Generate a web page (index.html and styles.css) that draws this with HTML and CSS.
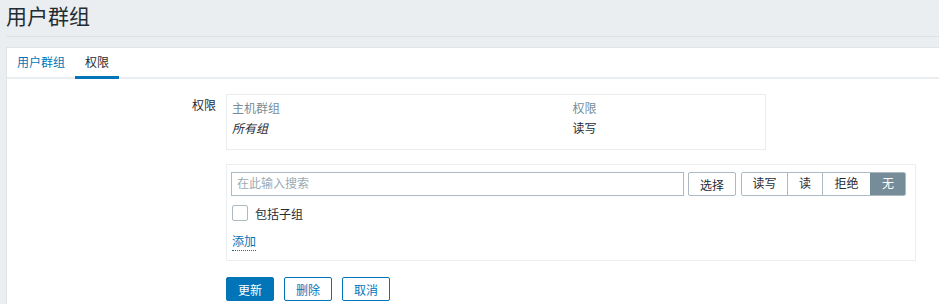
FILE: index.html
```html
<!DOCTYPE html>
<html lang="zh">
<head>
<meta charset="utf-8">
<title>用户群组</title>
<link rel="stylesheet" href="styles.css">
</head>
<body>
<header class="page-header">
  <h1 class="page-title">用户群组</h1>
</header>
<main class="panel">
  <ul class="tabs">
    <li class="tab">用户群组</li>
    <li class="tab tab-active">权限</li>
  </ul>
  <div class="form">
    <div class="form-row row-first">
      <label class="form-label">权限</label>
      <div class="form-field">
        <table class="perm-table">
          <thead>
            <tr><th class="col-group">主机群组</th><th>权限</th></tr>
          </thead>
          <tbody>
            <tr><td class="italic">所有组</td><td>读写</td></tr>
          </tbody>
        </table>
      </div>
    </div>
    <div class="form-row">
      <div class="form-label"></div>
      <div class="form-field">
        <div class="add-box">
          <div class="search-row">
            <input class="search-input" type="text" placeholder="在此输入搜索">
            <button class="btn-alt">选择</button>
            <div class="seg">
              <span class="seg-item seg-w47">读写</span>
              <span class="seg-item seg-w35">读</span>
              <span class="seg-item seg-w48">拒绝</span>
              <span class="seg-item seg-w35 seg-active">无</span>
            </div>
          </div>
          <label class="check-row">
            <span class="checkbox"></span>
            <span>包括子组</span>
          </label>
          <div class="add-row"><a class="link-dotted">添加</a></div>
        </div>
      </div>
    </div>
    <div class="form-row">
      <div class="form-label"></div>
      <div class="form-field actions">
        <button class="btn-primary">更新</button>
        <button class="btn-outline">删除</button>
        <button class="btn-outline">取消</button>
      </div>
    </div>
  </div>
</main>
</body>
</html>
```
FILE: styles.css
```css
* { box-sizing: border-box; }
html, body {
  margin: 0;
  padding: 0;
  background: #ebeef0;
  font-family: "Liberation Sans", Arial, "Noto Sans CJK SC", sans-serif;
  font-size: 12px;
  color: #1f2c33;
}
.page-header {
  margin: 0 0 0 6px;
  height: 37px;
  border-bottom: 1px solid #dde2e5;
}
.page-title {
  margin: 0;
  padding-top: 5px;
  font-size: 21px;
  font-weight: normal;
  line-height: 24px;
  color: #1f2c33;
}
.panel {
  margin: 10px 0 0 6px;
  background: #fff;
  border-left: 1px solid #dfe4e7;
  border-top: 1px solid #dfe4e7;
  height: 260px;
}
.tabs {
  list-style: none;
  margin: 0;
  padding: 0;
  display: flex;
  height: 31px;
  border-bottom: 2px solid #ebeef0;
}
.tab {
  padding: 8px 10px 0;
  height: 31px;
  line-height: 14px;
  color: #0275b8;
}
.tab-active {
  color: #1f2c33;
  border-bottom: 3px solid #0275b8;
}
.form {
  padding-top: 15px;
}
.form-row {
  display: flex;
  margin-bottom: 15px;
}
.row-first { margin-bottom: 14px; }
.form-label {
  width: 219px;
  text-align: right;
  padding-right: 10px;
  padding-top: 5px;
  line-height: 14px;
  flex: none;
}
.form-field {
  flex: none;
}
.perm-table {
  width: 540px;
  border: 1px solid #ebeef0;
  border-collapse: collapse;
  height: 56px;
}
.perm-table th {
  font-weight: normal;
  color: #768d99;
  text-align: left;
  padding: 7px 5px 0;
  height: 22px;
  line-height: 14px;
  vertical-align: top;
}
.perm-table .col-group { width: 341px; }
.perm-table td {
  padding: 5px 5px 13px;
  line-height: 14px;
  vertical-align: top;
}
.italic { font-style: italic; }
.add-box {
  width: 690px;
  border: 1px solid #ebeef0;
  padding: 7px 5px 8px 4px;
  height: 97px;
}
.search-row {
  display: flex;
  align-items: center;
}
.search-input {
  width: 453px;
  height: 24px;
  border: 1px solid #acbbc2;
  padding: 0 5px;
  font: inherit;
  color: #1f2c33;
  outline: none;
  margin: 0;
}
.search-input::placeholder { color: #9aabb3; }
.btn-alt {
  margin-left: 4px;
  width: 48px;
  height: 24px;
  background: #fff;
  border: 1px solid #acbbc2;
  border-radius: 2px;
  font: inherit;
  color: #1f2c33;
  padding: 0;
}
.seg {
  margin-left: 5px;
  display: flex;
  height: 24px;
  border: 1px solid #acbbc2;
  border-radius: 2px;
  overflow: hidden;
}
.seg-item {
  text-align: center;
  line-height: 22px;
  border-left: 1px solid #acbbc2;
  color: #1f2c33;
}
.seg-item:first-child { border-left: none; }
.seg-w47 { width: 45px; }
.seg-w35 { width: 35px; }
.seg-w48 { width: 48px; }
.seg-active {
  background: #768d99;
  border-left-color: #768d99;
  color: #fff;
}
.check-row {
  display: flex;
  align-items: center;
  margin-top: 9px;
  height: 16px;
}
.checkbox {
  width: 16px;
  height: 16px;
  border: 1px solid #acbbc2;
  border-radius: 2px;
  margin-left: 1px;
  margin-right: 7px;
}
.add-row {
  margin-top: 14px;
  line-height: 14px;
  padding-left: 1px;
}
.link-dotted {
  color: #0275b8;
  border-bottom: 1px dotted #0275b8;
  padding-bottom: 1px;
}
.actions {
  display: flex;
  gap: 10px;
  padding-top: 1px;
}
.actions button {
  height: 24px;
  width: 48px;
  font: inherit;
  border-radius: 2px;
  padding: 0;
}
.btn-primary {
  background: #0275b8;
  border: 1px solid #0275b8;
  color: #fff;
}
.btn-outline {
  background: #fff;
  border: 1px solid #0275b8;
  color: #0275b8;
}
```
